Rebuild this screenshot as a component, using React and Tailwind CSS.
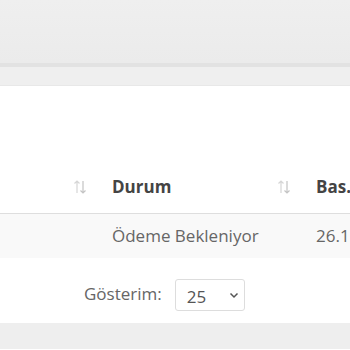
import React from 'react';

function SortIcon() {
  return (
    <svg width="16" height="16" viewBox="0 0 16 16" fill="none" className="shrink-0">
      <path d="M5 14V2M2.5 4.5L5 2l2.5 2.5" stroke="#d6d6d6" strokeWidth="1.2" />
      <path d="M11 2v12M8.5 11.5L11 14l2.5-2.5" stroke="#c4c4c4" strokeWidth="1.2" />
    </svg>
  );
}

export default function App() {
  return (
    <div className="w-[350px] h-[350px] overflow-hidden bg-white font-['Open_Sans',sans-serif]">
      {/* top toolbar */}
      <div className="h-[63px] bg-gradient-to-b from-[#efefef] to-[#ebebeb]" />
      <div className="h-[4px] bg-[#e2e2e2]" />
      <div className="h-[19px] bg-[#efefef] border-b border-[#e8e8e8]" />

      {/* table */}
      <div className="mt-[78px] overflow-hidden">
        <div className="w-[500px] ml-[-12px]">
          <div className="flex h-[50px] items-center pb-[4px] border-b border-[#dedede] text-[17px] font-bold text-[#444]">
            <div className="w-[112px] flex justify-end pr-[12px]">
              <SortIcon />
            </div>
            <div className="w-[204px] flex items-center justify-between px-[12px]">
              <span>Durum</span>
              <SortIcon />
            </div>
            <div className="px-[12px]">Bas.</div>
          </div>
          <div className="flex h-[44px] items-center bg-[#f9f9f9] text-[17px] text-[#666]">
            <div className="w-[112px]" />
            <div className="w-[204px] px-[12px]">Ödeme Bekleniyor</div>
            <div className="px-[12px]">26.11.2024</div>
          </div>
        </div>
      </div>

      {/* footer */}
      <div className="h-[65px] flex items-start pt-[21px] pl-[84px] gap-[13px] text-[17px] text-[#666]">
        <span className="mt-[2px]">Gösterim:</span>
        <div className="w-[70px] h-[32px] border border-[#ddd] rounded-[3px] flex items-center justify-between pl-[11px] pr-[5px] text-[#555]">
          <span className="pt-[4px]">25</span>
          <svg width="10" height="10" viewBox="0 0 10 10" fill="none">
            <path d="M1.5 3.5L5 7l3.5-3.5" stroke="#555" strokeWidth="1.5" />
          </svg>
        </div>
      </div>
      <div className="h-[26px] bg-[#eeeeee]" />
    </div>
  );
}
